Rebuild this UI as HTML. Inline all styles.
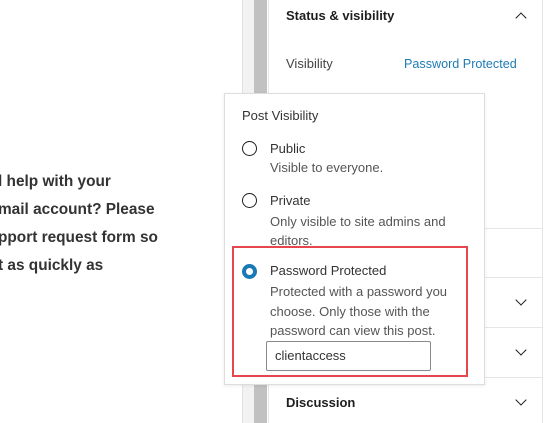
<!DOCTYPE html>
<html><head><style>
body{margin:0;width:550px;height:423px;overflow:hidden;background:#fff;font-family:"Liberation Sans",sans-serif;position:relative;color:#1e1e1e}
.a{position:absolute;white-space:nowrap}
.lt{font-weight:bold;font-size:15.4px;color:#333;left:-2px}
.s{font-size:13px}
.g{color:#555}
.chev{position:absolute;width:7px;height:7px;border-right:1.8px solid #1e1e1e;border-bottom:1.8px solid #1e1e1e}
.r{position:absolute;left:242px;width:15px;height:15px;border:1.5px solid #1e1e1e;border-radius:50%;box-sizing:border-box}
</style></head><body>
<div class="a lt" style="top:173px">l help with your</div>
<div class="a lt" style="top:201px">mail account? Please</div>
<div class="a lt" style="top:229px">pport request form so</div>
<div class="a lt" style="top:257px">t as quickly as</div>
<div class="a" style="left:242px;top:0;width:1px;height:423px;background:#e2e2e2"></div>
<div class="a" style="left:254px;top:0;width:13px;height:423px;background:#c1c1c1"></div>
<div class="a" style="left:243px;top:0;width:11px;height:423px;background:#f2f2f2"></div>
<div class="a" style="left:268px;top:0;width:1px;height:423px;background:#e6e6e6"></div>
<div class="a" style="left:542px;top:0;width:1px;height:423px;background:#e6e6e6"></div>
<div class="a" style="left:269px;top:277px;width:273px;height:1px;background:#e6e6e6"></div>
<div class="a" style="left:269px;top:327px;width:273px;height:1px;background:#e6e6e6"></div>
<div class="a" style="left:269px;top:377px;width:273px;height:1px;background:#e6e6e6"></div>
<div class="a" style="left:269px;top:228px;width:273px;height:1px;background:#e6e6e6"></div>
<div class="a s" style="left:286px;top:8px;font-weight:bold;color:#1e1e1e">Status &amp; visibility</div>
<div class="chev" style="left:517px;top:14px;transform:rotate(-135deg)"></div>
<div class="a s" style="left:286px;top:56px;color:#444">Visibility</div>
<div class="a" style="left:404px;top:57px;color:#1d7cb4;font-size:12.6px">Password Protected</div>
<div class="chev" style="left:517px;top:296px;transform:rotate(45deg)"></div>
<div class="chev" style="left:517px;top:346px;transform:rotate(45deg)"></div>
<div class="chev" style="left:517px;top:396px;transform:rotate(45deg)"></div>
<div class="a s" style="left:286px;top:395px;font-weight:bold">Discussion</div>
<div class="a" style="left:224px;top:93px;width:259px;height:290px;background:#fff;border:1px solid #ddd;box-shadow:0 1px 3px rgba(0,0,0,.08)"></div>
<div class="a s g" style="left:242px;top:108px;color:#333">Post Visibility</div>
<div class="r" style="top:141px"></div>
<div class="a s" style="left:270px;top:141px;color:#333">Public</div>
<div class="a s g" style="left:270px;top:160px">Visible to everyone.</div>
<div class="r" style="top:193px"></div>
<div class="a s" style="left:270px;top:193px;color:#333">Private</div>
<div class="a s g" style="left:270px;top:212px;line-height:19px">Only visible to site admins and<br>editors.</div>
<div class="a" style="left:232px;top:246px;width:232px;height:127px;border:2px solid #e5474d"></div>
<div class="a" style="left:242px;top:264px;width:15px;height:15px;border-radius:50%;background:#1a7ab5"></div>
<div class="a" style="left:246px;top:268px;width:7px;height:7px;border-radius:50%;background:#fff"></div>
<div class="a s" style="left:270px;top:263px;color:#333">Password Protected</div>
<div class="a s g" style="left:270px;top:282px;line-height:19.5px">Protected with a password you<br>choose. Only those with the<br>password can view this post.</div>
<div class="a" style="left:266px;top:341px;width:163px;height:28px;border:1px solid #8a8a8a;border-radius:2px"></div>
<div class="a s" style="left:275px;top:348px;color:#333">clientaccess</div>
</body></html>
